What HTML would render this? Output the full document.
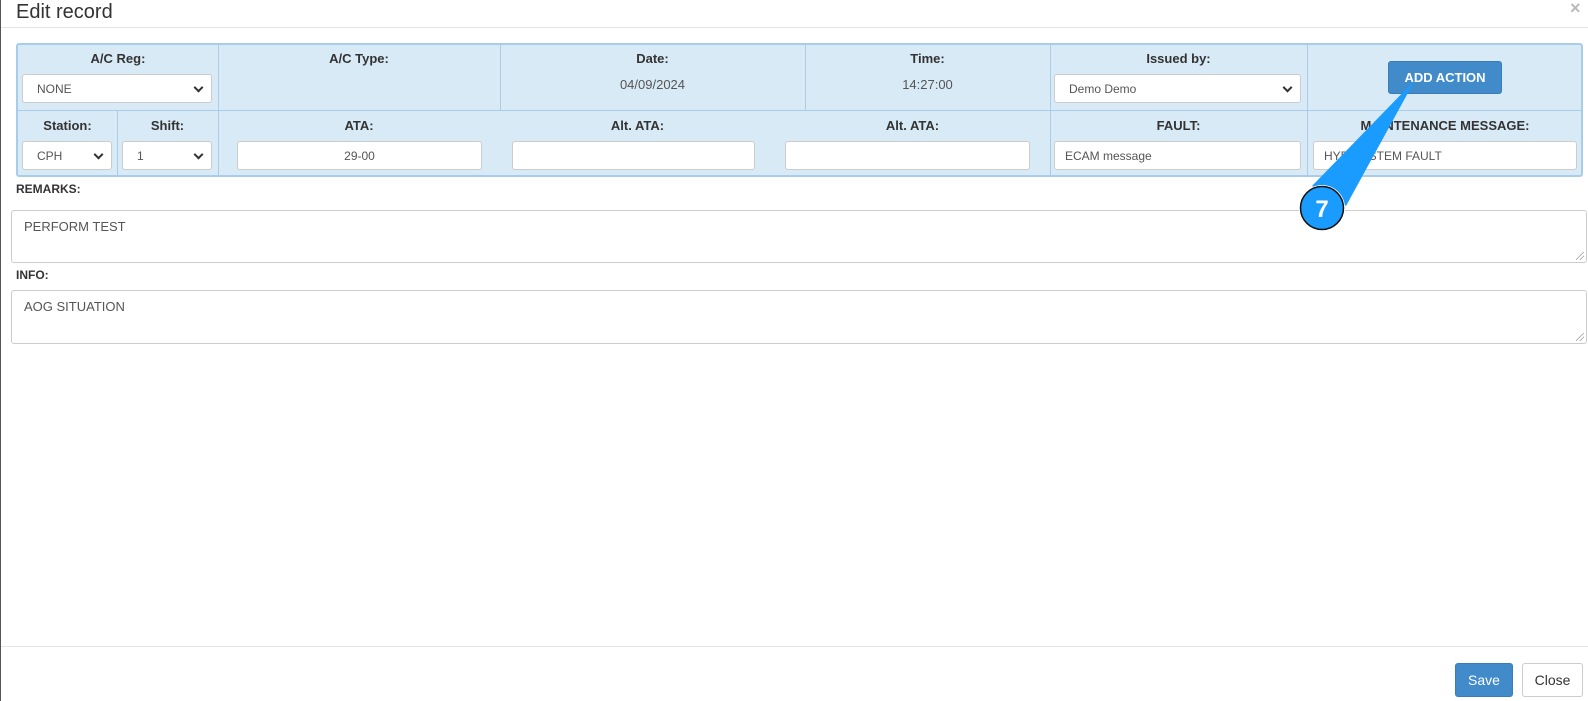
<!DOCTYPE html>
<html><head><meta charset="utf-8"><style>
*{box-sizing:border-box;margin:0;padding:0}
body{width:1588px;height:701px;background:#fff;font-family:"Liberation Sans",Arial,sans-serif;position:relative;overflow:hidden;color:#333}
.a{position:absolute}
.lbl{position:absolute;font-size:13px;font-weight:bold;color:#333;text-align:center}
.in{position:absolute;background:#fff;border:1px solid #ccc;border-radius:3px;font-size:12px;color:#555;padding-left:14px;display:flex;align-items:center}
.sel::after{content:"";position:absolute;right:9px;top:50%;width:5px;height:5px;border-right:2px solid #333;border-bottom:2px solid #333;transform:translateY(-70%) rotate(45deg)}
.vl{position:absolute;width:1px;background:#a9cde9}
.grip{position:absolute;right:2px;bottom:2px;width:8px;height:8px;background:linear-gradient(135deg,transparent 45%,#999 45%,#999 52%,transparent 52%,transparent 70%,#999 70%,#999 77%,transparent 77%)}
</style></head><body>
<div class="a" style="left:0;top:0;width:1px;height:701px;background:#555"></div>
<div class="a" style="left:16px;top:0;font-size:20px;color:#333;line-height:24px">Edit record</div>
<div class="a" style="left:1570px;top:-2px;font-size:18px;color:#bbb;font-weight:bold">×</div>
<div class="a" style="left:1px;top:27px;width:1587px;height:1px;background:#e5e5e5"></div>

<div class="a" style="left:16px;top:43px;width:1567px;height:134px;background:#d9eaf7;border:2px solid #a9cde9;border-radius:3px"></div>
<div class="a" style="left:17px;top:110px;width:1565px;height:1px;background:#a9cde9"></div>
<div class="vl" style="left:218px;top:44px;height:132px"></div>
<div class="vl" style="left:500px;top:44px;height:66px"></div>
<div class="vl" style="left:805px;top:44px;height:66px"></div>
<div class="vl" style="left:1050px;top:44px;height:132px"></div>
<div class="vl" style="left:1307px;top:44px;height:132px"></div>
<div class="vl" style="left:117px;top:110px;height:66px"></div>

<div class="lbl" style="left:18px;width:200px;top:51px">A/C Reg:</div>
<div class="lbl" style="left:218px;width:282px;top:51px">A/C Type:</div>
<div class="lbl" style="left:500px;width:305px;top:51px">Date:</div>
<div class="lbl" style="left:805px;width:245px;top:51px">Time:</div>
<div class="lbl" style="left:1050px;width:257px;top:51px">Issued by:</div>
<div class="a" style="left:500px;width:305px;top:77px;text-align:center;font-size:13px;color:#555">04/09/2024</div>
<div class="a" style="left:805px;width:245px;top:77px;text-align:center;font-size:13px;color:#555">14:27:00</div>
<div class="in sel" style="left:22px;top:74px;width:190px;height:29px">NONE</div>
<div class="in sel" style="left:1054px;top:74px;width:247px;height:29px">Demo Demo</div>
<div class="a" style="left:1388px;top:61px;width:114px;height:33px;background:#428bca;border:1px solid #3a7bb8;border-radius:3px;color:#fff;font-size:13px;font-weight:bold;display:flex;align-items:center;justify-content:center">ADD ACTION</div>

<div class="lbl" style="left:18px;width:99px;top:118px">Station:</div>
<div class="lbl" style="left:117px;width:101px;top:118px">Shift:</div>
<div class="lbl" style="left:218px;width:282px;top:118px">ATA:</div>
<div class="lbl" style="left:500px;width:275px;top:118px">Alt. ATA:</div>
<div class="lbl" style="left:775px;width:275px;top:118px">Alt. ATA:</div>
<div class="lbl" style="left:1050px;width:257px;top:118px">FAULT:</div>
<div class="lbl" style="left:1307px;width:276px;top:118px">MAINTENANCE MESSAGE:</div>
<div class="in sel" style="left:22px;top:141px;width:90px;height:29px">CPH</div>
<div class="in sel" style="left:122px;top:141px;width:90px;height:29px">1</div>
<div class="in" style="left:237px;top:141px;width:245px;height:29px;justify-content:center;padding:0">29-00</div>
<div class="in" style="left:512px;top:141px;width:243px;height:29px"></div>
<div class="in" style="left:785px;top:141px;width:245px;height:29px"></div>
<div class="in" style="left:1054px;top:141px;width:247px;height:29px;padding-left:10px">ECAM message</div>
<div class="in" style="left:1313px;top:141px;width:264px;height:29px;padding-left:10px">HYD SYSTEM FAULT</div>

<div class="a" style="left:16px;top:182px;font-size:12px;font-weight:bold">REMARKS:</div>
<div class="a" style="left:11px;top:210px;width:1576px;height:53px;border:1px solid #ccc;border-radius:3px;font-size:13px;color:#555;padding:8px 12px">PERFORM TEST<div class="grip"></div></div>
<div class="a" style="left:16px;top:268px;font-size:12px;font-weight:bold">INFO:</div>
<div class="a" style="left:11px;top:290px;width:1576px;height:54px;border:1px solid #ccc;border-radius:3px;font-size:13px;color:#555;padding:8px 12px">AOG SITUATION<div class="grip"></div></div>

<div class="a" style="left:1px;top:646px;width:1587px;height:1px;background:#e5e5e5"></div>
<div class="a" style="left:1455px;top:663px;width:58px;height:34px;background:#428bca;border:1px solid #3a7bb8;border-radius:3px;color:#fff;font-size:14px;display:flex;align-items:center;justify-content:center">Save</div>
<div class="a" style="left:1522px;top:663px;width:61px;height:34px;background:#fff;border:1px solid #ccc;border-radius:3px;color:#333;font-size:14px;display:flex;align-items:center;justify-content:center">Close</div>

<svg class="a" style="left:0;top:0" width="1588" height="701">
<polygon points="1312,186 1415,80 1346,206" fill="#1a9cff"/>
<circle cx="1322" cy="208" r="23" fill="#fff"/>
<circle cx="1322" cy="208" r="21.5" fill="#1a9cff" stroke="#111" stroke-width="1.5"/>
<text x="1322" y="217" text-anchor="middle" font-family="Liberation Sans" font-weight="bold" font-size="24" fill="#fff">7</text>
</svg>
</body></html>
